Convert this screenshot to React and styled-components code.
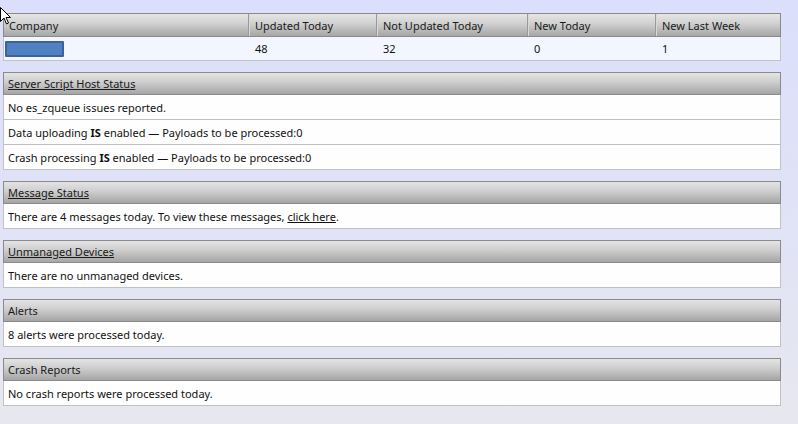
import React from "react";
import styled, { createGlobalStyle } from "styled-components";

const GlobalStyle = createGlobalStyle`
  html, body { margin: 0; padding: 0; }
  body {
    min-height: 424px;
    background: linear-gradient(180deg, #dcdffb 0%, #e1e3f5 60%, #e7e8ef 100%);
    font-family: "Noto Sans", "Liberation Sans", Arial, sans-serif;
    font-size: 11px;
    color: #111;
  }
`;

const Page = styled.div`
  position: relative;
  width: 778px;
  padding: 13px 0 17px 3px;
  display: flex;
  flex-direction: column;
  gap: 11px;
`;

const cols = "244px 128px 151px 128px 125px";

const SummaryTable = styled.div`
  display: flex;
  flex-direction: column;
`;

const HeadRow = styled.div`
  display: grid;
  grid-template-columns: ${cols};
  height: 24px;
  box-sizing: border-box;
  border: 1px solid #8a8a8a;
  background: linear-gradient(180deg, #e6e6e6 0%, #cfcfcf 45%, #a6a6a6 100%);
`;

const HeadCell = styled.div`
  display: flex;
  align-items: center;
  padding-left: ${(p) => (p.$first ? "5px" : "6px")};
  border-left: ${(p) => (p.$first ? "none" : "1px solid #9a9a9a")};
  box-shadow: ${(p) => (p.$first ? "none" : "inset 1px 0 0 #d8d8d8")};
  color: #1a1a1a;
`;

const DataRow = styled.div`
  display: grid;
  grid-template-columns: ${cols};
  height: 24px;
  box-sizing: border-box;
  border: 1px solid #c2c2c2;
  border-top: none;
  background: #f3f5ff;
`;

const DataCell = styled.div`
  display: flex;
  align-items: center;
  padding-left: ${(p) => (p.$first ? "0" : "7px")};
`;

const Redacted = styled.span`
  display: block;
  width: 59px;
  height: 16px;
  margin-left: 1px;
  box-sizing: border-box;
  background: #4f80c2;
  border: 2px solid #3c619c;
  border-radius: 1px;
`;

const Section = styled.section`
  display: flex;
  flex-direction: column;
`;

const SectionHead = styled.div`
  height: 23px;
  box-sizing: border-box;
  border: 1px solid #8a8a8a;
  background: linear-gradient(180deg, #e4e4e4 0%, #cdcdcd 45%, #a5a5a5 100%);
  display: flex;
  align-items: center;
  padding-left: 4px;
  color: #1a1a1a;
  text-decoration: ${(p) => (p.$link ? "underline" : "none")};
`;

const Row = styled.div`
  height: 25px;
  box-sizing: border-box;
  border: 1px solid #c2c2c2;
  border-top: none;
  background: #fefefe;
  display: flex;
  align-items: center;
  padding-left: 4px;
  white-space: pre;
`;

const Link = styled.span`
  text-decoration: underline;
`;

const Strong = styled.b`
  font-weight: 700;
`;

const Cursor = styled.svg`
  position: absolute;
  left: 0;
  top: 7px;
`;

const sections = [
  {
    title: "Server Script Host Status",
    link: true,
    rows: [
      "No es_zqueue issues reported.",
      <>Data uploading <Strong>IS</Strong> enabled — Payloads to be processed:0</>,
      <>Crash processing <Strong>IS</Strong> enabled — Payloads to be processed:0</>,
    ],
  },
  {
    title: "Message Status",
    link: true,
    rows: [<>There are 4 messages today. To view these messages, <Link>click here</Link>.</>],
  },
  { title: "Unmanaged Devices", link: true, rows: ["There are no unmanaged devices."] },
  { title: "Alerts", link: false, rows: ["8 alerts were processed today."] },
  { title: "Crash Reports", link: false, rows: ["No crash reports were processed today."] },
];

export default function App() {
  const heads = ["Company", "Updated Today", "Not Updated Today", "New Today", "New Last Week"];
  const values = ["48", "32", "0", "1"];
  return (
    <>
      <GlobalStyle />
      <Page>
        <SummaryTable>
          <HeadRow>
            {heads.map((h, i) => (
              <HeadCell key={h} $first={i === 0}>{h}</HeadCell>
            ))}
          </HeadRow>
          <DataRow>
            <DataCell $first><Redacted /></DataCell>
            {values.map((v, i) => (
              <DataCell key={i}>{v}</DataCell>
            ))}
          </DataRow>
        </SummaryTable>
        {sections.map((s) => (
          <Section key={s.title}>
            <SectionHead $link={s.link}>{s.title}</SectionHead>
            {s.rows.map((r, i) => (
              <Row key={i}>{r}</Row>
            ))}
          </Section>
        ))}
        <Cursor width="12" height="20" viewBox="0 0 12 20">
          <path d="M0.5 0.5 L0.5 14.5 L4 11 L6.5 17 L8.5 16 L6 10.5 L10.5 10.5 Z" fill="#fff" stroke="#000" strokeWidth="1" />
        </Cursor>
      </Page>
    </>
  );
}
